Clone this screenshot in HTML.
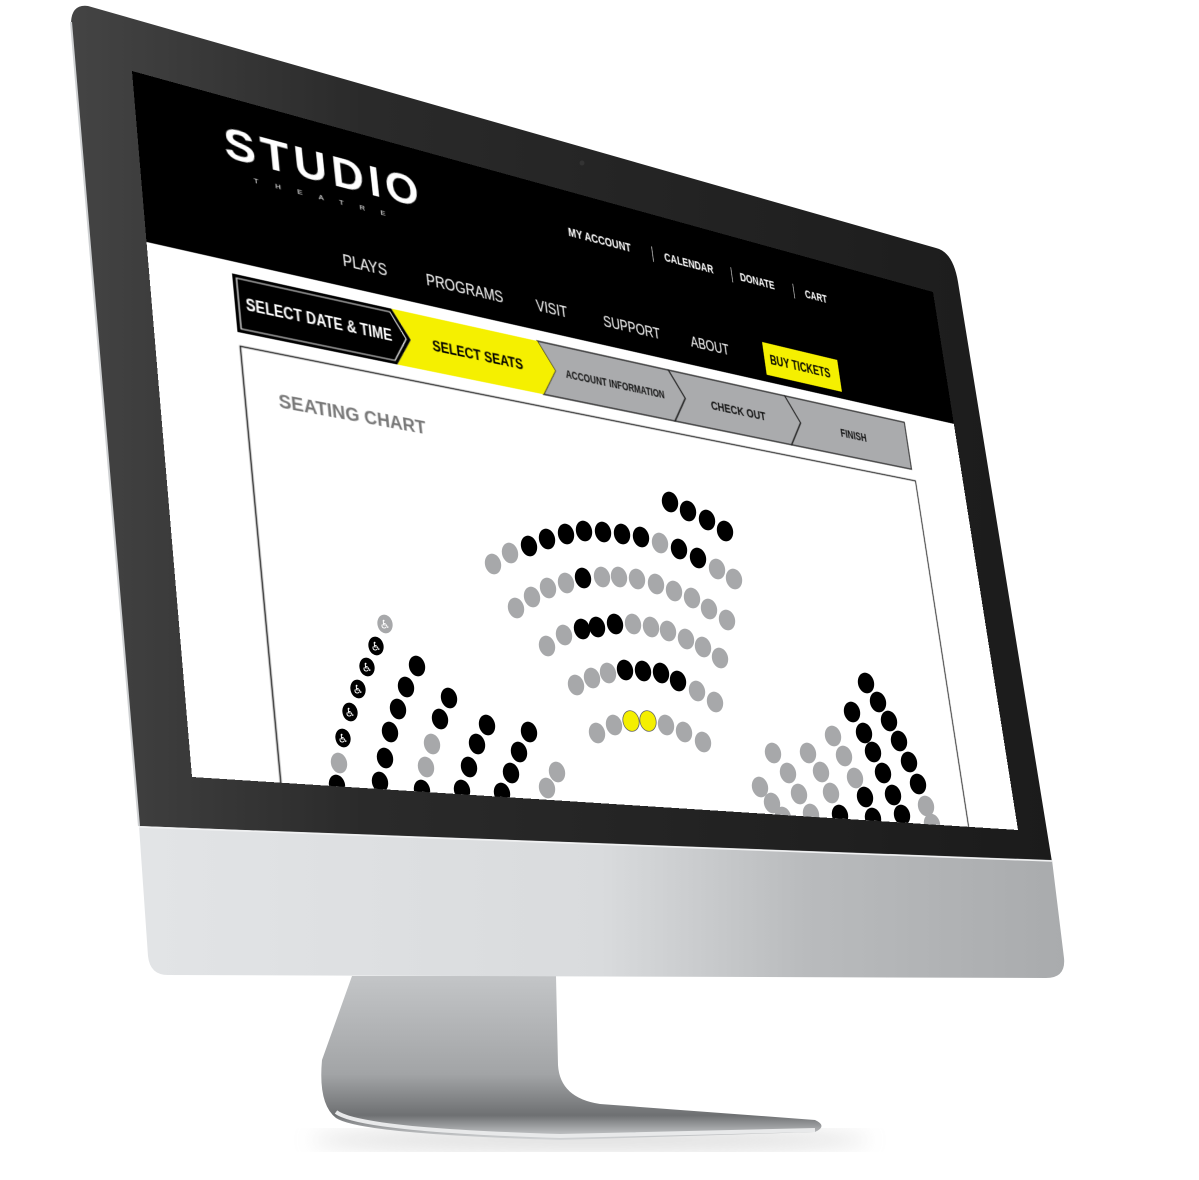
<!DOCTYPE html>
<html><head><meta charset="utf-8">
<style>
html,body{margin:0;padding:0;background:#fff;width:1199px;height:1180px;overflow:hidden}
#wrap{position:relative;width:1199px;height:1180px}
svg{position:absolute;left:0;top:0}
#scr{position:absolute;left:0;top:0;width:1000px;height:700px;overflow:hidden;background:#fff;transform-origin:0 0;
transform:matrix3d(1.09814,0.3140,0,0.00031848, 0.068429,0.93860,0,-0.00009006, 0,0,1,0, 132,71,0,1);
font-family:"Liberation Sans",Arial,sans-serif}
.a{position:absolute;white-space:nowrap}
.hdr{left:0;top:0;width:1000px;height:178px;background:#000}
.tl{color:#fff;font-weight:bold;font-size:14px;top:42px;transform:scaleX(.85);transform-origin:0 0}
.sep{width:1px;height:19px;background:#ccc;top:41px}
.nav{color:#fff;top:139px;font-size:19px;transform:scaleX(.8);transform-origin:0 0}
</style></head><body><div id="wrap">
<svg width="1199" height="1180" viewBox="0 0 1199 1180">
<defs>
<linearGradient id="bz" x1="0" y1="0" x2="1" y2="0"><stop offset="0" stop-color="#444"/><stop offset=".3" stop-color="#2a2a2a"/><stop offset="1" stop-color="#1b1b1b"/></linearGradient>
<linearGradient id="ch" x1="0" y1="0" x2="1" y2="0"><stop offset="0" stop-color="#e2e4e6"/><stop offset=".5" stop-color="#d9dbdd"/><stop offset=".72" stop-color="#b9bbbd"/><stop offset="1" stop-color="#a9abad"/></linearGradient>
<linearGradient id="nk" x1="0" y1="0" x2="0" y2="1"><stop offset="0" stop-color="#c3c5c7"/><stop offset=".6" stop-color="#a2a4a6"/><stop offset=".85" stop-color="#6e7072"/><stop offset="1" stop-color="#d5d7d9"/></linearGradient>
<filter id="bl"><feGaussianBlur stdDeviation="10"/></filter>
</defs>
<ellipse cx="590" cy="1140" rx="280" ry="10" fill="#b5b5b5" filter="url(#bl)" opacity=".5"/>
<path d="M352,976 L556,976 L558,1065 Q560,1098 600,1104 L815,1120 Q828,1126 815,1132 L560,1140 Q360,1134 336,1118 Q318,1104 322,1060 Z" fill="url(#nk)"/>
<path d="M336,1112 Q360,1130 560,1136 L815,1130" fill="none" stroke="#e8e9ea" stroke-width="4"/>
<path d="M88,6 Q72,4 71,22 L139,826 L1052,862 L958,282 Q953,252 936,248 Z" fill="url(#bz)"/>
<path d="M71,22 L139,826" stroke="#cfd1d3" stroke-width="2"/>
<path d="M139,826 L1052,860 L1064,958 Q1066,978 1046,978 L168,975 Q150,975 148,956 Z" fill="url(#ch)"/>
<path d="M139,827 L1052,861" stroke="#f0f1f2" stroke-width="1.5"/>
</svg>
<div id="scr">
<div class="a hdr"></div>
<div class="a" style="left:85px;top:24px;color:#fff;font-weight:bold;font-size:48px;letter-spacing:5px">STUDIO</div>
<div class="a" style="left:112px;top:80px;color:#fff;font-size:8px;letter-spacing:17px">THEATRE</div>
<div class="a tl" style="left:469px">MY ACCOUNT</div><div class="a sep" style="left:577px"></div>
<div class="a tl" style="left:593px">CALENDAR</div><div class="a sep" style="left:685px"></div>
<div class="a tl" style="left:697px">DONATE</div><div class="a sep" style="left:774px"></div>
<div class="a tl" style="left:791px">CART</div>
<div class="a nav" style="left:198px">PLAYS</div>
<div class="a nav" style="left:289px">PROGRAMS</div>
<div class="a nav" style="left:417px">VISIT</div>
<div class="a nav" style="left:500px">SUPPORT</div>
<div class="a nav" style="left:614px">ABOUT</div>
<div class="a" style="left:716px;top:128px;width:110px;height:41px;background:#f5f000"></div>
<div class="a" style="left:724px;top:139px;color:#000;font-weight:bold;font-size:17px;transform:scaleX(.78);transform-origin:0 0">BUY TICKETS</div>
<svg width="1000" height="700" style="position:absolute;left:0;top:0">
<rect x="82.5" y="266.5" width="839" height="500" fill="#fff" stroke="#222" stroke-width="1.5"/>
<path d="M738,191 L918,191 L918,252 L738,252 L756,221.5 Z" fill="#aaabad" stroke="#222" stroke-width="1.5"/>
<path d="M578,191 L738,191 L756,221.5 L738,252 L578,252 L596,221.5 Z" fill="#aaabad" stroke="#222" stroke-width="1.5"/>
<path d="M413,191 L578,191 L596,221.5 L578,252 L413,252 L431,221.5 Z" fill="#aaabad" stroke="#222" stroke-width="1.5"/>
<path d="M246,191 L413,191 L431,221.5 L413,252 L246,252 L264,221.5 Z" fill="#f5f000"/>
<path d="M81,191 L246,191 L264,221.5 L246,252 L81,252 Z" fill="#000"/>
<path d="M85,195 L244,195 L259,221.5 L244,248 L85,248 Z" fill="none" stroke="#fff" stroke-width="1.2"/>
<g font-family="Liberation Sans,sans-serif" font-weight="bold">
<text transform="translate(92,227) scale(.8,1)" fill="#fff" font-size="18">SELECT DATE &amp; TIME</text>
<text transform="translate(340,228) scale(.82,1)" fill="#000" font-size="17" text-anchor="middle">SELECT SEATS</text>
<text transform="translate(506,227) scale(.85,1)" fill="#111" font-size="12" text-anchor="middle">ACCOUNT INFORMATION</text>
<text transform="translate(668,228) scale(.85,1)" fill="#111" font-size="15" text-anchor="middle">CHECK OUT</text>
<text transform="translate(834,228) scale(.85,1)" fill="#111" font-size="14" text-anchor="middle">FINISH</text>
<text transform="translate(116,323) scale(.9,1)" fill="#777" font-size="21">SEATING CHART</text>
</g>
</svg>
</div>
<svg width="1199" height="1180" viewBox="0 0 1199 1180">
<defs><clipPath id="cp"><polygon points="132,71 933,292 1018,830 192,777"/></clipPath></defs>
<circle cx="582" cy="163" r="2.5" fill="#333"/>
<g clip-path="url(#cp)" id="seats"></g>
</svg>
</div>
<script>
var G='#a7a8aa',B='#000',Y='#f4ef00';
var s=[
[670,502,B],[688,511,B],[707,520,B],[725,531,B],
[493,564,G],[510,553,G],[529,546,B],[547,539,B],[566,534,B],[584,531,B],[603,532,B],[622,534,B],[641,537,B],[660,543,G],[679,549,B],[698,558,B],[717,569,G],[734,579,G],
[516,608,G],[532,597,G],[548,588,G],[566,583,G],[583,578,B],[602,577,G],[619,577,G],[637,579,G],[656,584,G],[674,591,G],[692,598,G],[709,609,G],[727,620,G],
[547,646,G],[564,635,G],[582,629,B],[597,627,B],[615,624,B],[633,624,G],[651,627,G],[668,631,G],[686,639,G],[703,647,G],[720,658,G],
[576,685,G],[592,678,G],[608,673,G],[625,670,B],[643,671,B],[661,673,B],[678,681,B],[697,691,G],[715,702,G],
[597,733,G],[614,725,G],[631,721,Y],[648,721,Y],[666,725,G],[684,732,G],[703,742,G],
[339,763,G],[337,785,B],
[417,666,B],[406,687,B],[398,709,B],[390,732,B],[385,758,B],[380,782,B],
[449,698,B],[440,719,B],[432,744,G],[426,767,G],[422,790,B],
[487,725,B],[477,744,B],[469,767,B],[462,790,B],
[529,732,B],[519,752,B],[511,773,B],[502,793,B],
[557,772,G],[547,788,G],
[866,683,B],[878,702,B],[889,721,B],[899,741,B],[909,762,B],[918,784,B],[926,806,G],[932,824,G],
[852,712,B],[864,733,B],[873,752,B],[883,773,B],[893,795,B],[902,815,B],
[833,736,G],[844,756,G],[855,778,G],[865,797,B],[873,818,B],
[808,753,G],[821,772,G],[831,793,G],[840,815,B],
[773,753,G],[788,773,G],[799,794,G],[811,814,G],
[760,787,G],[772,803,G],[783,817,G]
];
var w=[[385,624,G],[376,646,B],[367,667,B],[358,689,B],[350,712,B],[343,738,B]];
var h='';
s.forEach(function(p){h+='<ellipse cx="'+p[0]+'" cy="'+p[1]+'" rx="8" ry="10.5" transform="rotate(-15 '+p[0]+' '+p[1]+')" fill="'+p[2]+'"'+(p[2]==Y?' stroke="#666" stroke-width="0.8"':'')+'/>';});
w.forEach(function(p){h+='<ellipse cx="'+p[0]+'" cy="'+p[1]+'" rx="8" ry="10" transform="rotate(-15 '+p[0]+' '+p[1]+')" fill="'+p[2]+'" stroke="#fff" stroke-width="1"/><text x="'+p[0]+'" y="'+(p[1]+4.5)+'" font-size="12" fill="#fff" text-anchor="middle" font-family="DejaVu Sans,sans-serif">♿</text>';});
document.getElementById('seats').innerHTML=h;
</script>
</body></html>
